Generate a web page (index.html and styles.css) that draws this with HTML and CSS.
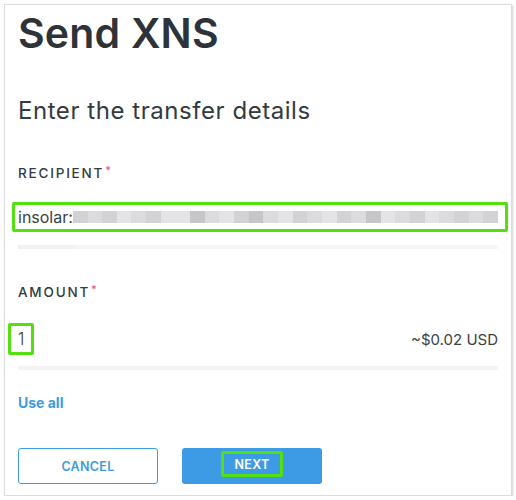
FILE: index.html
```html
<!DOCTYPE html>
<html>
<head>
<meta charset="utf-8">
<link rel="stylesheet" href="styles.css">
</head>
<body>
<div class="card">
  <h1 class="title">Send XNS</h1>
  <h2 class="subtitle">Enter the transfer details</h2>

  <div class="field recipient-field">
    <div class="label">RECIPIENT<span class="req">*</span></div>
    <div class="recipient hl">
      <span class="val">insolar:</span>
      <span class="blur">
        <i class="b2"></i><i class="b3"></i><i class="b2"></i><i class="b4"></i><i class="b3"></i><i class="b2"></i><i class="b4"></i><i class="b4"></i><i class="b1"></i><i class="b3"></i><i class="b4"></i><i class="b2"></i><i class="b1"></i><i class="b3"></i><i class="b4"></i><i class="b2"></i><i class="b3"></i><i class="b4"></i><i class="b2"></i><i class="b3"></i><i class="b1"></i><i class="b4"></i><i class="b3"></i><i class="b2"></i><i class="b4"></i><i class="b3"></i><i class="b2"></i><i class="b3"></i><i class="b2"></i>
      </span>
    </div>
    <div class="underline"><span class="ul-dark"></span><span class="ul-light"></span></div>
  </div>

  <div class="field amount-field">
    <div class="label">AMOUNT<span class="req">*</span></div>
    <div class="amount">
      <span class="one hl">1</span>
      <span class="usd">~$0.02 USD</span>
    </div>
    <div class="underline"><span class="ul-dark"></span></div>
  </div>

  <a class="use-all">Use all</a>

  <div class="actions">
    <button class="btn btn-outline">CANCEL</button>
    <button class="btn btn-primary"><span class="hl next">NEXT</span></button>
  </div>
</div>
</body>
</html>
```
FILE: styles.css
```css
* { box-sizing: border-box; }
html, body { margin: 0; padding: 0; background: #fff; }
body { font-family: Inter, "Noto Sans", sans-serif; color: #2d3339; }

.card {
  margin: 4px 0 0 4px;
  width: 508px;
  height: 492px;
  border: 1px solid #dcdcdc;
  box-shadow: 1px 1px 2px rgba(0,0,0,0.18);
  padding: 3px 13px 0 13px;
  display: flex;
  flex-direction: column;
}

.title {
  margin: 0;
  font-size: 41px;
  line-height: 50px;
  font-weight: 600;
  color: #2d3339;
  letter-spacing: 0.2px;
}

.subtitle {
  margin: 38px 0 0 0;
  font-size: 24px;
  line-height: 30px;
  font-weight: 400;
  letter-spacing: 0.55px;
  color: #333a40;
}

.label {
  font-size: 13.5px;
  line-height: 16px;
  font-weight: 500;
  letter-spacing: 1.8px;
  color: #333a40;
}
.req { color: #e8508a; font-size: 11px; vertical-align: 4px; letter-spacing: 0; margin-left: 1px; }

.recipient-field { margin-top: 36px; }
.recipient {
  margin: 21px -10px 0 -6px;
  height: 30px;
  padding: 0 7px 0 3px;
  display: flex;
  align-items: center;
  font-size: 16px;
  color: #3a3f44;
}
.hl { border: 3px solid #52e10f; border-radius: 2px; }
.val { line-height: 24px; }
.blur { display: flex; flex: 1; height: 12px; margin-top: -1px; }
.blur i { flex: 1; height: 12px; }
.b1 { background: #c6c6c8; }
.b2 { background: #d2d2d4; }
.b3 { background: #dbdbdd; }
.b4 { background: #e4e4e6; }

.underline { display: flex; height: 4px; margin-top: 13px; }
.ul-dark { width: 57px; background: #f1f1f1; }
.ul-light { flex: 1; background: #f6f6f6; }
.amount-field .ul-dark { width: 100%; background: #f4f4f4; }

.amount-field { margin-top: 32px; }
.amount {
  margin-top: 23px;
  display: flex;
  justify-content: space-between;
  align-items: center;
  font-size: 16px;
  color: #3a3f44;
}
.one {
  margin-left: -10px;
  width: 26px;
  height: 32px;
  display: flex;
  align-items: center;
  justify-content: center;
  font-size: 17px;
  font-weight: 300;
}
.usd { font-size: 15px; color: #3a3f44; }

.amount-field .underline { margin-top: 11px; }

.use-all {
  margin-top: 25px;
  font-size: 14px;
  line-height: 16px;
  font-weight: 700;
  color: #3d9be6;
}

.actions { margin-top: 37px; display: flex; gap: 24px; }
.btn {
  width: 140px;
  height: 36px;
  border-radius: 3px;
  font-family: Inter, sans-serif;
  font-size: 12.5px;
  font-weight: 600;
  letter-spacing: 0.3px;
  display: flex;
  align-items: center;
  justify-content: center;
  padding: 0;
}
.btn-outline { background: #fff; border: 1px solid #3d9be6; color: #3d9be6; }
.btn-primary { background: #3d9be6; border: none; color: #fff; }
.next { width: 62px; height: 26px; display: flex; align-items: center; justify-content: center; margin-top: -4px; }
```
